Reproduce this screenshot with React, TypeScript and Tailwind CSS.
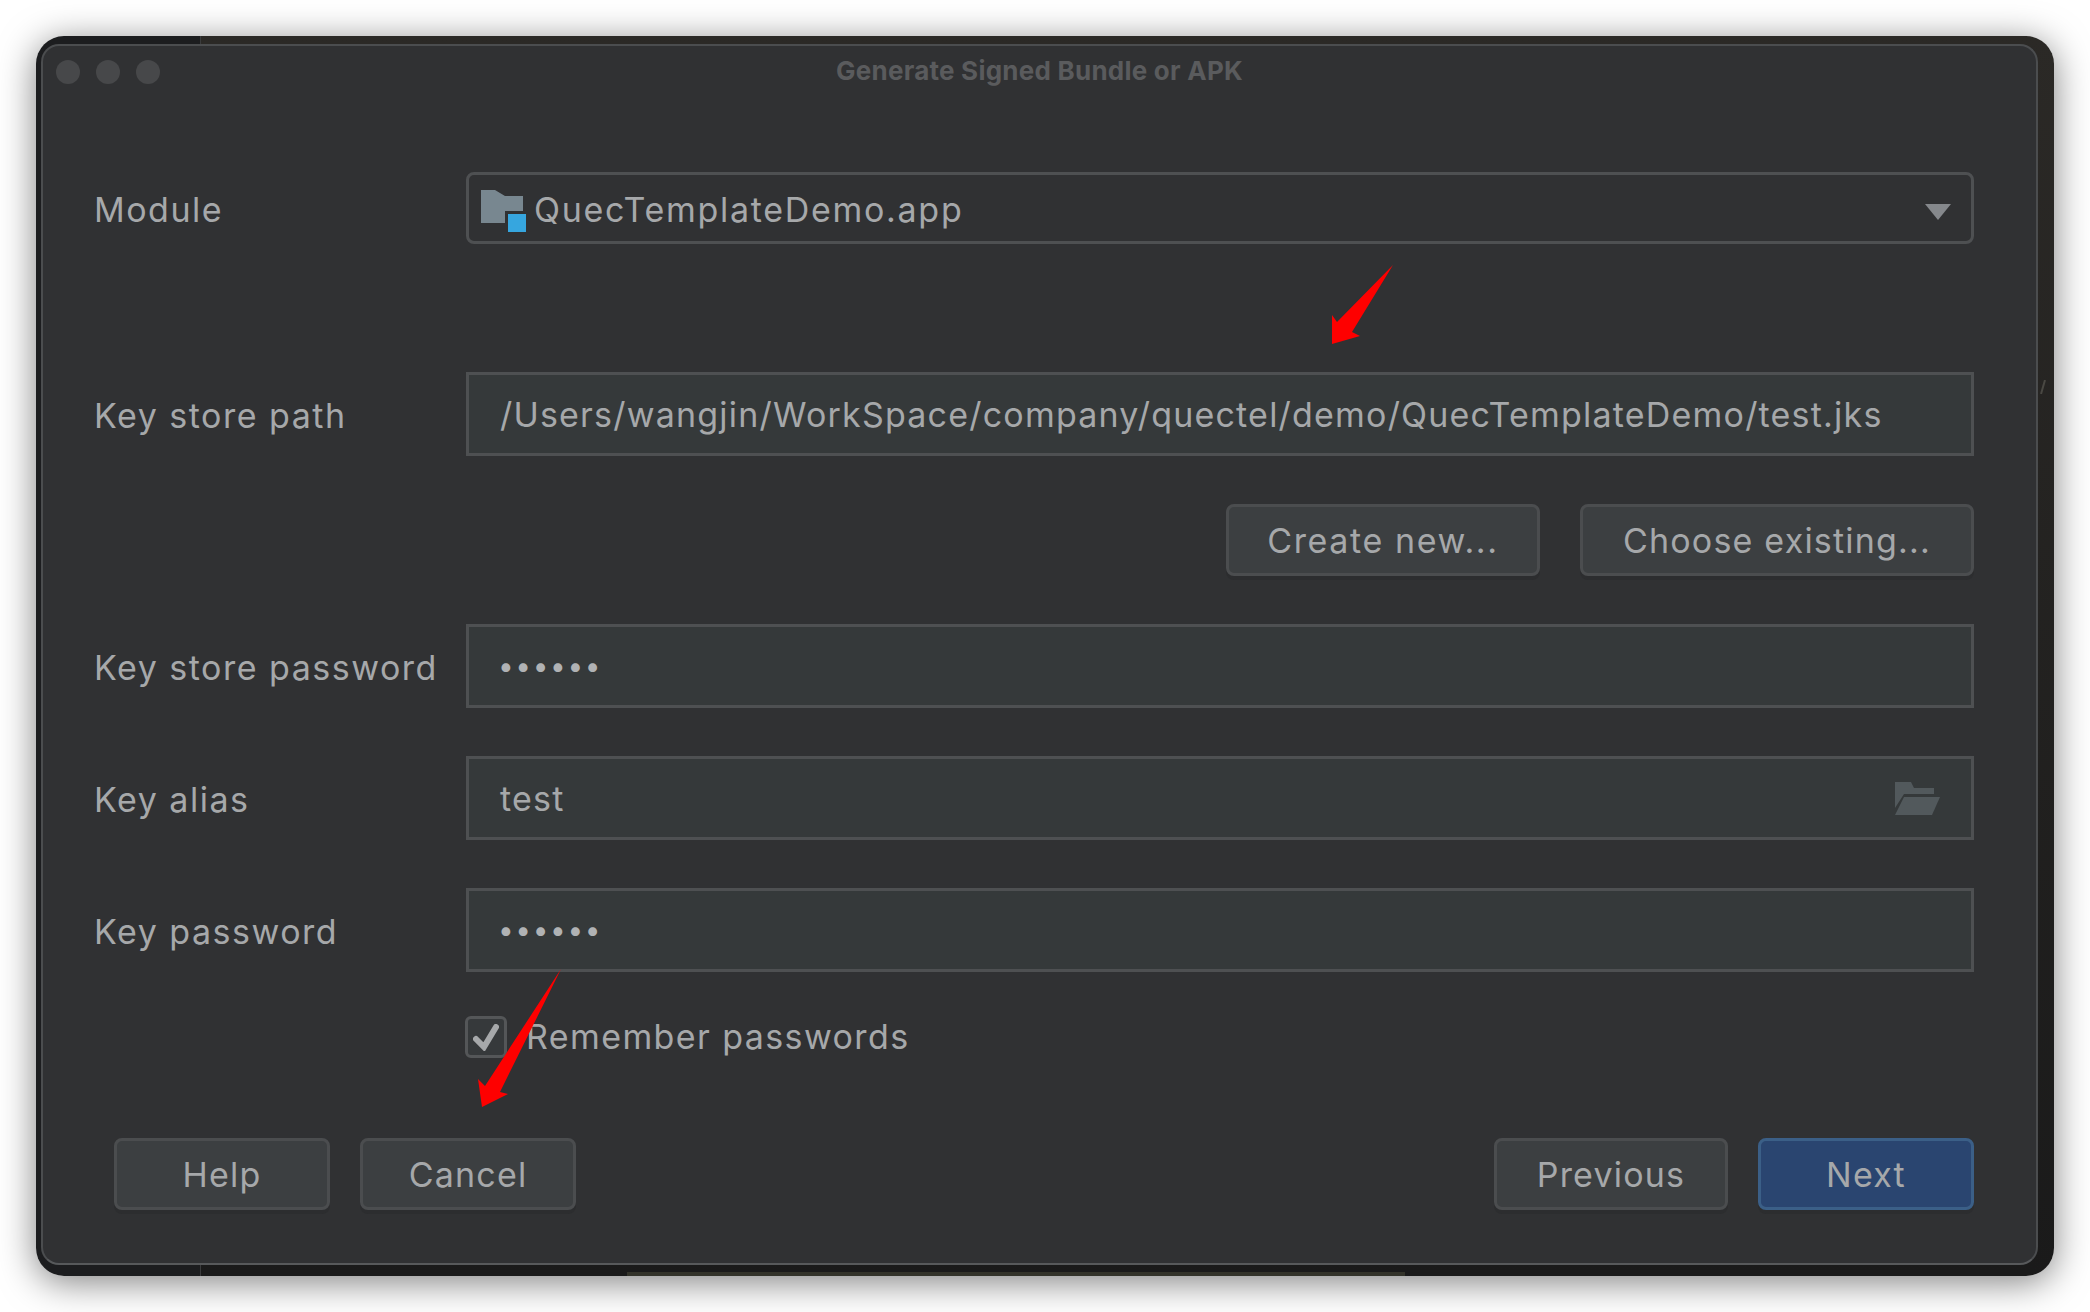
import React from 'react';

const font = 'font-["Inter","Liberation_Sans",sans-serif]';
const text = 'text-[34px] leading-none tracking-[1.2px] text-[#a6a8aa]';

const Label = ({ children }: { children: React.ReactNode }) => (
  <div className="-ml-[1px] w-[372px] shrink-0 pt-[3px] text-[34px] leading-none tracking-[1.5px] text-[#a6a8aa]">{children}</div>
);

const Field = ({ children }: { children: React.ReactNode }) => (
  <div className={`flex h-[84px] flex-1 items-center justify-between border-[3px] border-[#4e5052] bg-[#35393a] pl-[31px] pr-[16px] ${text}`}>
    {children}
  </div>
);

const Button = ({ children, width, primary }: { children: React.ReactNode; width: string; primary?: boolean }) => (
  <div
    className={`flex h-[72px] items-center justify-center rounded-[8px] border-[3px] pt-[2px] shadow-[0_4px_0_#2c2d2f] ${width} ${text} ${
      primary ? 'border-[#3b5f87] bg-[#2a4570]' : 'border-[#4b4d4f] bg-[#3c3f41]'
    }`}
  >
    {children}
  </div>
);

const Dots = () => (
  <span className="-ml-[2px] text-[28px] leading-none tracking-[1.6px] text-[#b0b2b4]">••••••</span>
);

export default function App() {
  return (
    <div className={`relative h-[1312px] w-[2090px] overflow-hidden bg-white pl-[36px] pt-[36px] ${font}`}>
      {/* window with the wallpaper showing round it */}
      <div className="relative h-[1240px] w-[2018px] overflow-hidden rounded-[28px] bg-[linear-gradient(90deg,#1c1d1f_164px,#3a3b3c_164px,#3a3b3c_165px,transparent_165px),linear-gradient(180deg,#2b2926,#1a1a1a)] pb-[11px] pl-[5px] pr-[16px] pt-[8px]">
        <div className="absolute bottom-0 left-[591px] h-[4px] w-[778px] bg-[#33332a]" />
        <svg width="8" height="14" viewBox="0 0 8 14" className="absolute left-[2003px] top-[344px]">
          <path d="M6 0L2 14" stroke="#4a4843" strokeWidth="2" />
        </svg>
        <div className="relative flex h-full flex-col rounded-[18px] border-2 border-[#4b4d4f] border-b-[#57595b] bg-[#303133]">
          {/* title bar */}
          <div className="relative flex h-[54px] items-center justify-center">
            <div className="absolute left-[13px] top-[14px] flex gap-[16px]">
              <div className="h-[24px] w-[24px] rounded-full bg-[#47484a]" />
              <div className="h-[24px] w-[24px] rounded-full bg-[#47484a]" />
              <div className="h-[24px] w-[24px] rounded-full bg-[#47484a]" />
            </div>
            <span className="pb-[5px] text-[26px] font-bold tracking-[0.24px] text-[#5a5b5d]">Generate Signed Bundle or APK</span>
          </div>

          <div className="flex flex-1 flex-col pl-[52px] pr-[62px]">
            <div className="mt-[72px] flex items-center">
              <Label>Module</Label>
              <div className="flex h-[72px] flex-1 items-center rounded-[8px] border-[3px] border-[#4e5052] pl-[12px] pr-[20px]">
                <svg width="46" height="42" viewBox="0 0 46 42" className="mt-[6px] shrink-0">
                  <path d="M0 0h14l10 6h18v27H0z" fill="#788790" />
                  <path d="M24 21h22v21H24z" fill="#303133" />
                  <path d="M27 24h18v18H27z" fill="#36a6df" />
                </svg>
                <span className="ml-[7px] flex-1 pt-[3px] text-[34px] leading-none tracking-[1.7px] text-[#a6a8aa]">QuecTemplateDemo.app</span>
                <svg width="26" height="16" viewBox="0 0 26 16" className="mt-[8px] shrink-0">
                  <path d="M0 0h26L13 16z" fill="#85888c" />
                </svg>
              </div>
            </div>

            <div className="mt-[128px] flex items-center">
              <Label>Key store path</Label>
              <Field><span className="pt-[1px]">/Users/wangjin/WorkSpace/company/quectel/demo/QuecTemplateDemo/test.jks</span></Field>
            </div>

            <div className="mt-[48px] flex justify-end gap-[40px]">
              <Button width="w-[314px]"><span className="tracking-[1.6px]">Create new...</span></Button>
              <Button width="w-[394px]">Choose existing...</Button>
            </div>

            <div className="mt-[48px] flex items-center">
              <Label>Key store password</Label>
              <Field><Dots /></Field>
            </div>

            <div className="mt-[48px] flex items-center">
              <Label>Key alias</Label>
              <Field>
                <span className="pt-[1px]">test</span>
                <svg width="45" height="33" viewBox="0 0 45 33" className="mr-[15px] shrink-0">
                  <path d="M0 0h16l3 6h20v6H9L0 26z" fill="#52595c" />
                  <path d="M9 15h36l-8 18H0z" fill="#52595c" />
                </svg>
              </Field>
            </div>

            <div className="mt-[48px] flex items-center">
              <Label>Key password</Label>
              <Field><Dots /></Field>
            </div>

            <div className="mt-[44px] flex h-[42px] items-center pl-[371px]">
              <div className="-ml-[1px] flex h-[42px] w-[42px] items-center justify-center rounded-[6px] border-[3px] border-[#545658] bg-[#36393b]">
                <svg width="26" height="27" viewBox="0 0 26 27">
                  <path d="M3 15l8 8L23 3" fill="none" stroke="#a6a8aa" strokeWidth="6" strokeLinecap="round" />
                </svg>
              </div>
              <span className="ml-[19px] text-[34px] leading-none tracking-[1.4px] text-[#a6a8aa]">Remember passwords</span>
            </div>

            <div className="mt-[80px] flex justify-between pl-[19px]">
              <div className="flex gap-[30px]">
                <Button width="w-[216px]">Help</Button>
                <Button width="w-[216px]">Cancel</Button>
              </div>
              <div className="flex gap-[30px]">
                <Button width="w-[234px]">Previous</Button>
                <Button width="w-[216px]" primary>Next</Button>
              </div>
            </div>
          </div>
        </div>
      </div>

      {/* soft shadow of the window */}
      <div className="pointer-events-none absolute left-[36px] top-[36px] h-[1240px] w-[2018px] rounded-[28px] shadow-[0_6px_36px_rgba(0,0,0,0.5)]" />

      {/* red annotation arrows on top of the screenshot */}
      <svg width="64" height="82" viewBox="0 0 64 82" className="absolute left-[1331px] top-[264px]">
        <path d="M62 1L6 58L1 51V80L29 72L21 68z" fill="#fe0000" />
      </svg>
      <svg width="88" height="142" viewBox="0 0 88 142" className="absolute left-[476px] top-[968px]">
        <path d="M85 1L9 118L2 111L6 139L32 126L24 124z" fill="#fe0000" />
      </svg>
    </div>
  );
}
